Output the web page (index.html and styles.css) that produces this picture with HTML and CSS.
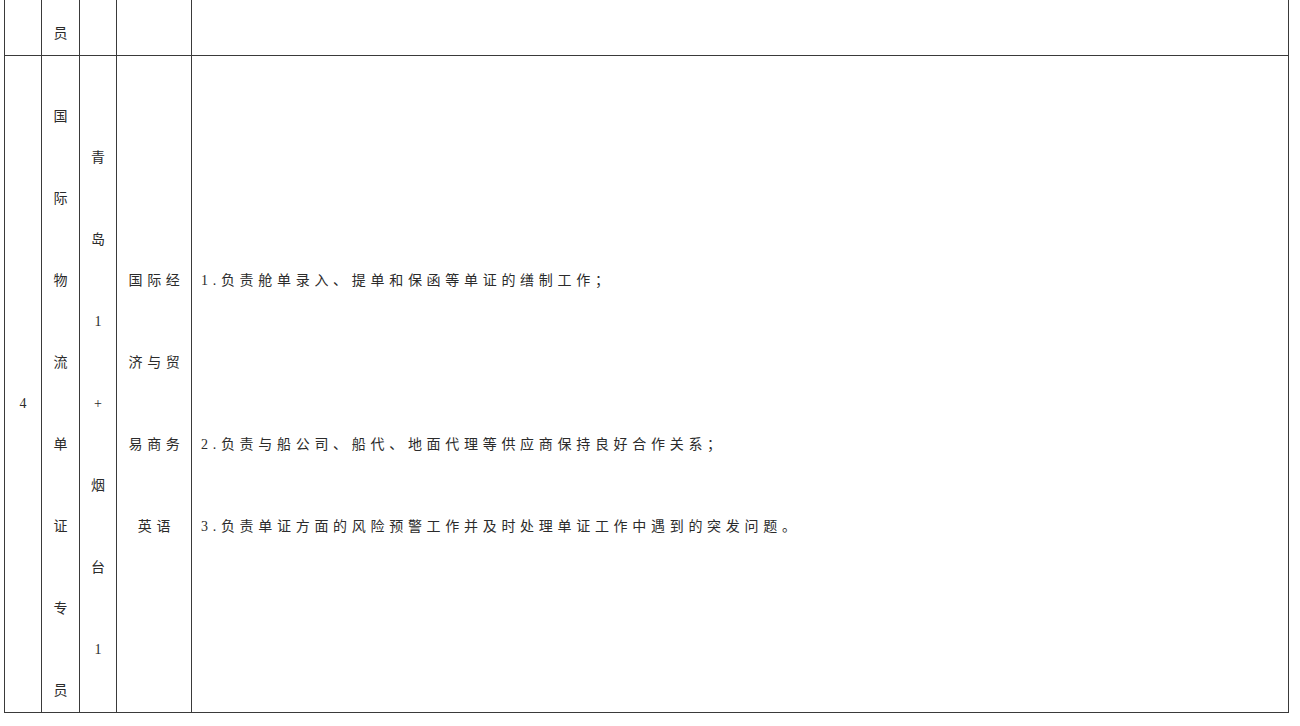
FILE: index.html
```html
<!DOCTYPE html>
<html lang="zh-CN">
<head>
<meta charset="utf-8">
<title>岗位表</title>
<link rel="stylesheet" href="styles.css">
</head>
<body>
<div class="sheet">
  <div class="cell top"></div>
  <div class="cell top narrow"><div class="t">员</div></div>
  <div class="cell top"></div>
  <div class="cell top"></div>
  <div class="cell top"></div>

  <div class="cell main c1"><div class="ln">4</div></div>
  <div class="cell main c2">
    <div class="ln">国</div><div class="ln">际</div><div class="ln">物</div><div class="ln">流</div>
    <div class="ln">单</div><div class="ln">证</div><div class="ln">专</div><div class="ln">员</div>
  </div>
  <div class="cell main c3">
    <div class="ln">青</div><div class="ln">岛</div><div class="ln">1</div><div class="ln">+</div>
    <div class="ln">烟</div><div class="ln">台</div><div class="ln">1</div>
  </div>
  <div class="cell main c4 spaced">
    <div class="ln">国际经</div><div class="ln">济与贸</div><div class="ln">易商务</div><div class="ln">英语</div>
  </div>
  <div class="cell main c5 spaced">
    <div class="ln">1.负责舱单录入、提单和保函等单证的缮制工作；</div>
    <div class="ln"></div>
    <div class="ln">2.负责与船公司、船代、地面代理等供应商保持良好合作关系；</div>
    <div class="ln">3.负责单证方面的风险预警工作并及时处理单证工作中遇到的突发问题。</div>
  </div>
</div>
</body>
</html>
```
FILE: styles.css
```css
html, body {
  margin: 0;
  padding: 0;
  background: #fff;
}
body {
  padding-left: 4px;
  font-family: "Liberation Serif", "Noto Sans CJK SC", serif;
  font-size: 14px;
  color: #2b2b2b;
}
.sheet {
  display: grid;
  grid-template-columns: 36px 37px 36px 74px 1096px;
  grid-template-rows: 55px 656px;
  gap: 1px;
  width: 1285px;
  background: #3a3a3a;
  padding: 0 1px 1px 1px;
  box-sizing: border-box;
}
.cell {
  background: #fff;
  overflow: hidden;
  text-align: center;
}
.top .t {
  padding-top: 25px;
  line-height: 18px;
}
.ln {
  height: 82px;
  line-height: 82px;
  white-space: nowrap;
}
.c1 { padding-top: 307px; }
.c2 { padding-top: 20px; }
.c3 { padding-top: 61px; }
.c4 { padding-top: 184px; }
.c5 {
  padding-top: 184px;
  padding-left: 9px;
  text-align: left;
}
.spaced { letter-spacing: 4.7px; }
.c4 .ln { padding-left: 5px; }
```
